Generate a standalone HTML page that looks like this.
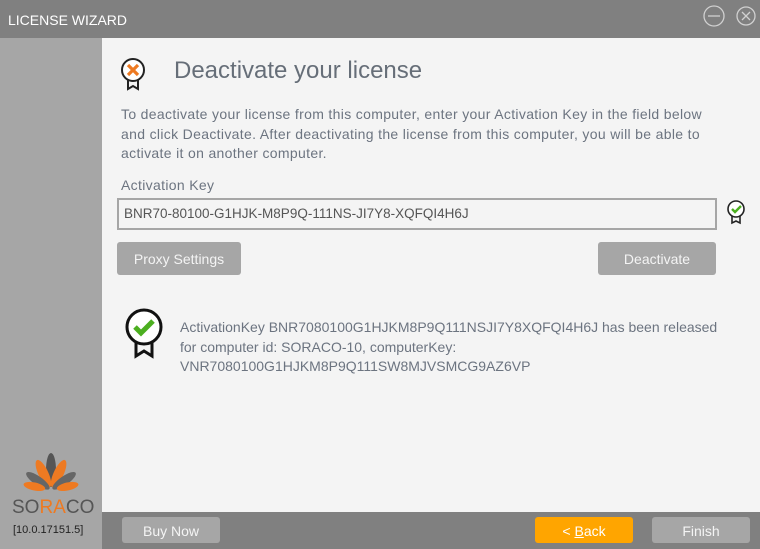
<!DOCTYPE html>
<html><head><style>
body{margin:0;width:760px;height:549px;position:relative;overflow:hidden;font-family:"Liberation Sans",sans-serif;background:#f4f4f4}
.a{position:absolute;white-space:nowrap}
.t{font-size:14px;letter-spacing:0.33px;color:#6c7480}
.btn{position:absolute;background:#a6a6a6;color:#f4f4f4;border-radius:3px;text-align:center;font-size:14px}
</style></head><body>
<div class="a" style="left:0;top:0;width:760px;height:38px;background:#808080"></div>
<div class="a" style="left:8px;top:12px;color:#fff;font-size:14px">LICENSE WIZARD</div>
<svg class="a" style="left:700px;top:4px" width="60" height="26"><circle cx="14" cy="12" r="10" fill="none" stroke="#d0d0d0" stroke-width="1.3"/><line x1="8" y1="12" x2="20" y2="12" stroke="#d0d0d0" stroke-width="1.3"/><circle cx="46" cy="12" r="9" fill="none" stroke="#d0d0d0" stroke-width="1.3"/><path d="M42 8l8 8M50 8l-8 8" stroke="#d0d0d0" stroke-width="1.3"/></svg>
<div class="a" style="left:0;top:38px;width:102px;height:511px;background:#a6a6a6"></div>
<div class="a" style="left:102px;top:512px;width:658px;height:37px;background:#808080"></div>
<svg class="a" style="left:15px;top:450px" width="72" height="42"><g transform="translate(36,40)"><ellipse rx="5" ry="17" transform="translate(0,-20)" fill="#555"/><ellipse rx="5" ry="15" transform="rotate(-25) translate(0,-18)" fill="#ee7a22"/><ellipse rx="5" ry="15" transform="rotate(25) translate(0,-18)" fill="#ee7a22"/><ellipse rx="4.5" ry="14" transform="rotate(-55) translate(0,-16)" fill="#666"/><ellipse rx="4.5" ry="14" transform="rotate(55) translate(0,-16)" fill="#666"/><ellipse rx="4" ry="11" transform="rotate(-78) translate(0,-17)" fill="#ee7a22"/><ellipse rx="4" ry="11" transform="rotate(78) translate(0,-17)" fill="#ee7a22"/></g></svg>
<div class="a" style="left:12px;top:497px;font-size:19px;color:#555">SO<span style="color:#ee7a22">RA</span>CO</div>
<div class="a" style="left:13px;top:524px;font-size:11px;color:#222">[10.0.17151.5]</div>
<svg class="a" style="left:119px;top:56px" width="28" height="36"><circle cx="14" cy="14" r="11" fill="#fff" stroke="#222" stroke-width="2"/><path d="M9 9l10 10M19 9l-10 10" stroke="#ee7a22" stroke-width="3.2"/><path d="M9 24v9l5-3 5 3v-9" fill="none" stroke="#222" stroke-width="2"/></svg>
<div class="a" style="left:174px;top:57px;font-size:24px;color:#666e78">Deactivate your license</div>
<div class="a t" style="left:121px;top:105px;line-height:19.5px">To deactivate your license from this computer, enter your Activation Key in the field below<br>and click Deactivate. After deactivating the license from this computer, you will be able to<br>activate it on another computer.</div>
<div class="a t" style="left:121px;top:177px">Activation Key</div>
<div class="a" style="left:117px;top:198px;width:596px;height:28px;border:2px solid #a6a6a6;background:#f4f4f4"></div>
<div class="a" style="left:124px;top:206px;font-size:13.5px;color:#555">BNR70-80100-G1HJK-M8P9Q-111NS-JI7Y8-XQFQI4H6J</div>
<svg class="a" style="left:726px;top:199px" width="22" height="26"><circle cx="10" cy="10" r="8" fill="#fff" stroke="#222" stroke-width="1.6"/><path d="M6 10l3 3 6-6" fill="none" stroke="#4caf20" stroke-width="2.4"/><path d="M6 17v7l4-2 4 2v-7" fill="none" stroke="#222" stroke-width="1.6"/></svg>
<div class="btn" style="left:117px;top:242px;width:124px;height:33px;line-height:35px">Proxy Settings</div>
<div class="btn" style="left:598px;top:242px;width:118px;height:33px;line-height:35px">Deactivate</div>
<svg class="a" style="left:123px;top:306px" width="44" height="54"><circle cx="21" cy="21" r="17" fill="#fff" stroke="#111" stroke-width="3"/><path d="M12 21l6 6 12-12" fill="none" stroke="#4caf20" stroke-width="5"/><path d="M13 37v13l8-5 8 5v-13" fill="none" stroke="#111" stroke-width="3"/></svg>
<div class="a t" style="left:180px;top:318px;line-height:19.5px;letter-spacing:0">ActivationKey BNR7080100G1HJKM8P9Q111NSJI7Y8XQFQI4H6J has been released<br>for computer id: SORACO-10, computerKey:<br>VNR7080100G1HJKM8P9Q111SW8MJVSMCG9AZ6VP</div>
<div class="btn" style="left:122px;top:517px;width:98px;height:26px;line-height:29px">Buy Now</div>
<div class="btn" style="left:535px;top:517px;width:98px;height:26px;line-height:29px;background:#ffa500;color:#fff">&lt; <u>B</u>ack</div>
<div class="btn" style="left:652px;top:517px;width:98px;height:26px;line-height:29px">Finish</div>
</body></html>
